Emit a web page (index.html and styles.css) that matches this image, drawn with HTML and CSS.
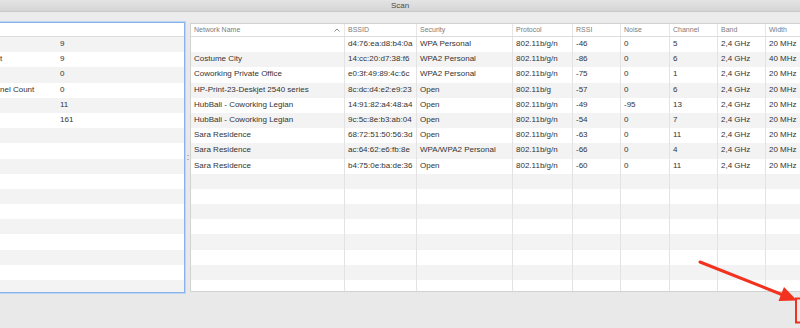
FILE: index.html
```html
<!DOCTYPE html>
<html lang="en">
<head>
  <meta charset="UTF-8">
  <meta name="viewport" content="width=device-width, initial-scale=1.0">
  <title>Scan</title>
  <link rel="stylesheet" href="styles.css">
</head>
<body>
  <div class="titlebar">Scan</div>
  <div class="toolbar"></div>

  <div class="content">
    <div class="summary">
      <div class="summary-head"></div>
      <div class="summary-row"><span class="key"></span><span class="val">9</span></div>
      <div class="summary-row"><span class="key">t</span><span class="val">9</span></div>
      <div class="summary-row"><span class="key"></span><span class="val">0</span></div>
      <div class="summary-row"><span class="key">nel Count</span><span class="val">0</span></div>
      <div class="summary-row"><span class="key"></span><span class="val">11</span></div>
      <div class="summary-row"><span class="key"></span><span class="val">161</span></div>
      <div class="summary-row"></div>
      <div class="summary-row"></div>
      <div class="summary-row"></div>
      <div class="summary-row"></div>
      <div class="summary-row"></div>
      <div class="summary-row"></div>
      <div class="summary-row"></div>
      <div class="summary-row"></div>
      <div class="summary-row"></div>
      <div class="summary-row"></div>
      <div class="summary-row"></div>
      <div class="summary-row"></div>
    </div>

    <div class="splitter"><span class="grip"></span></div>

    <div class="scan-table">
      <div class="row head">
        <div class="cell sorted">Network Name
          <svg class="sort" width="6" height="4" viewBox="0 0 6 4"><path d="M0.5 3.5 L3 1 L5.5 3.5" fill="none" stroke="#8a8a8a" stroke-width="1"/></svg>
        </div>
        <div class="cell">BSSID</div>
        <div class="cell">Security</div>
        <div class="cell">Protocol</div>
        <div class="cell">RSSI</div>
        <div class="cell">Noise</div>
        <div class="cell">Channel</div>
        <div class="cell">Band</div>
        <div class="cell">Width</div>
      </div>
      <div id="rows"></div>
    </div>
  </div>

  <svg class="annotation" width="800" height="328" viewBox="0 0 800 328">
    <line x1="700" y1="262" x2="783" y2="295" stroke="#f2321f" stroke-width="3" stroke-linecap="round"/>
    <polygon points="797,300.5 778.5,301 784,287" fill="#f2321f"/>
    <rect x="796" y="298.5" width="20" height="24" fill="none" stroke="#f2321f" stroke-width="2"/>
  </svg>

  <script>
    const networks = [
      ['', 'd4:76:ea:d8:b4:0a', 'WPA Personal', '802.11b/g/n', '-46', '0', '5', '2,4 GHz', '20 MHz'],
      ['Costume City', '14:cc:20:d7:38:f6', 'WPA2 Personal', '802.11b/g/n', '-86', '0', '6', '2,4 GHz', '40 MHz'],
      ['Coworking Private Office', 'e0:3f:49:89:4c:6c', 'WPA2 Personal', '802.11b/g/n', '-75', '0', '1', '2,4 GHz', '20 MHz'],
      ['HP-Print-23-Deskjet 2540 series', '8c:dc:d4:e2:e9:23', 'Open', '802.11b/g', '-57', '0', '6', '2,4 GHz', '20 MHz'],
      ['HubBali - Coworking Legian', '14:91:82:a4:48:a4', 'Open', '802.11b/g/n', '-49', '-95', '13', '2,4 GHz', '20 MHz'],
      ['HubBali - Coworking Legian', '9c:5c:8e:b3:ab:04', 'Open', '802.11b/g/n', '-54', '0', '7', '2,4 GHz', '20 MHz'],
      ['Sara Residence', '68:72:51:50:56:3d', 'Open', '802.11b/g/n', '-63', '0', '11', '2,4 GHz', '20 MHz'],
      ['Sara Residence', 'ac:64:62:e6:fb:8e', 'WPA/WPA2 Personal', '802.11b/g/n', '-66', '0', '4', '2,4 GHz', '20 MHz'],
      ['Sara Residence', 'b4:75:0e:ba:de:36', 'Open', '802.11b/g/n', '-60', '0', '11', '2,4 GHz', '20 MHz']
    ];

    const rows = document.getElementById('rows');
    for (let i = 0; i < 18; i++) {
      const data = networks[i] || ['', '', '', '', '', '', '', '', ''];
      const row = document.createElement('div');
      row.className = 'row';
      row.innerHTML = data.map(v => `<div class="cell">${v}</div>`).join('');
      rows.appendChild(row);
    }
  </script>
</body>
</html>
```

FILE: styles.css
```css
* {
  margin: 0;
  padding: 0;
  box-sizing: border-box;
}

body {
  width: 800px;
  height: 328px;
  overflow: hidden;
  background-color: #e9e9e9;
  font-family: 'Liberation Sans', Arial, sans-serif;
  color: #333333;
  position: relative;
}

.titlebar {
  height: 12px;
  background: linear-gradient(#e4e4e4, #d5d5d5);
  border-bottom: 1px solid #c9c9c9;
  text-align: center;
  font-size: 8px;
  line-height: 11px;
  color: #4a4a4a;
}

.toolbar {
  height: 10px;
  background-color: #ececec;
}

.content {
  display: flex;
  height: 271px;
}

/* summary pane on the left, it has the keyboard focus */
.summary {
  width: 185px;
  height: 271px;
  background-color: #ffffff;
  border: 1px solid #8ab2ea;
  border-left: none;
  box-shadow: 0 0 0 1px #bcd5f4;
  overflow: hidden;
}

.summary-head {
  height: 14px;
  border-bottom: 1px solid #dddddd;
}

.summary-row {
  display: flex;
  height: 15.2px;
  line-height: 14.5px;
  font-size: 8px;
}

.summary-row:nth-child(even) {
  background-color: #f3f3f3;
}

.summary-row .key {
  width: 60px;
  white-space: nowrap;
  overflow: hidden;
}

.splitter {
  width: 5px;
  display: flex;
  align-items: center;
  justify-content: flex-end;
}

.grip {
  width: 2px;
  height: 5px;
  border-top: 1px solid #b5b5b5;
  border-bottom: 1px solid #b5b5b5;
  margin-right: 1px;
}

/* scan results */
.scan-table {
  flex: 1;
  margin: 1px 0;
  background-color: #ffffff;
  border: 1px solid #d2d2d2;
  border-right: none;
  overflow: hidden;
}

.row {
  display: grid;
  grid-template-columns: 154px 72px 96px 60px 48px 49px 48px 48px 60px;
  height: 15.2px;
  line-height: 14.5px;
  font-size: 8px;
}

#rows .row:nth-child(even) {
  background-color: #f3f3f3;
}

.cell {
  padding: 0 3px;
  border-right: 1px solid #e3e3e3;
  white-space: nowrap;
  overflow: hidden;
}

.row.head {
  height: 13px;
  line-height: 12px;
  font-size: 7px;
  color: #7c7c7c;
  border-bottom: 1px solid #dcdcdc;
}

.row.head .cell {
  border-right-color: #e6e6e6;
}

.sorted {
  display: flex;
  align-items: center;
  justify-content: space-between;
}

.sort {
  margin-right: 1px;
}

.annotation {
  position: absolute;
  top: 0;
  left: 0;
  pointer-events: none;
}
```
